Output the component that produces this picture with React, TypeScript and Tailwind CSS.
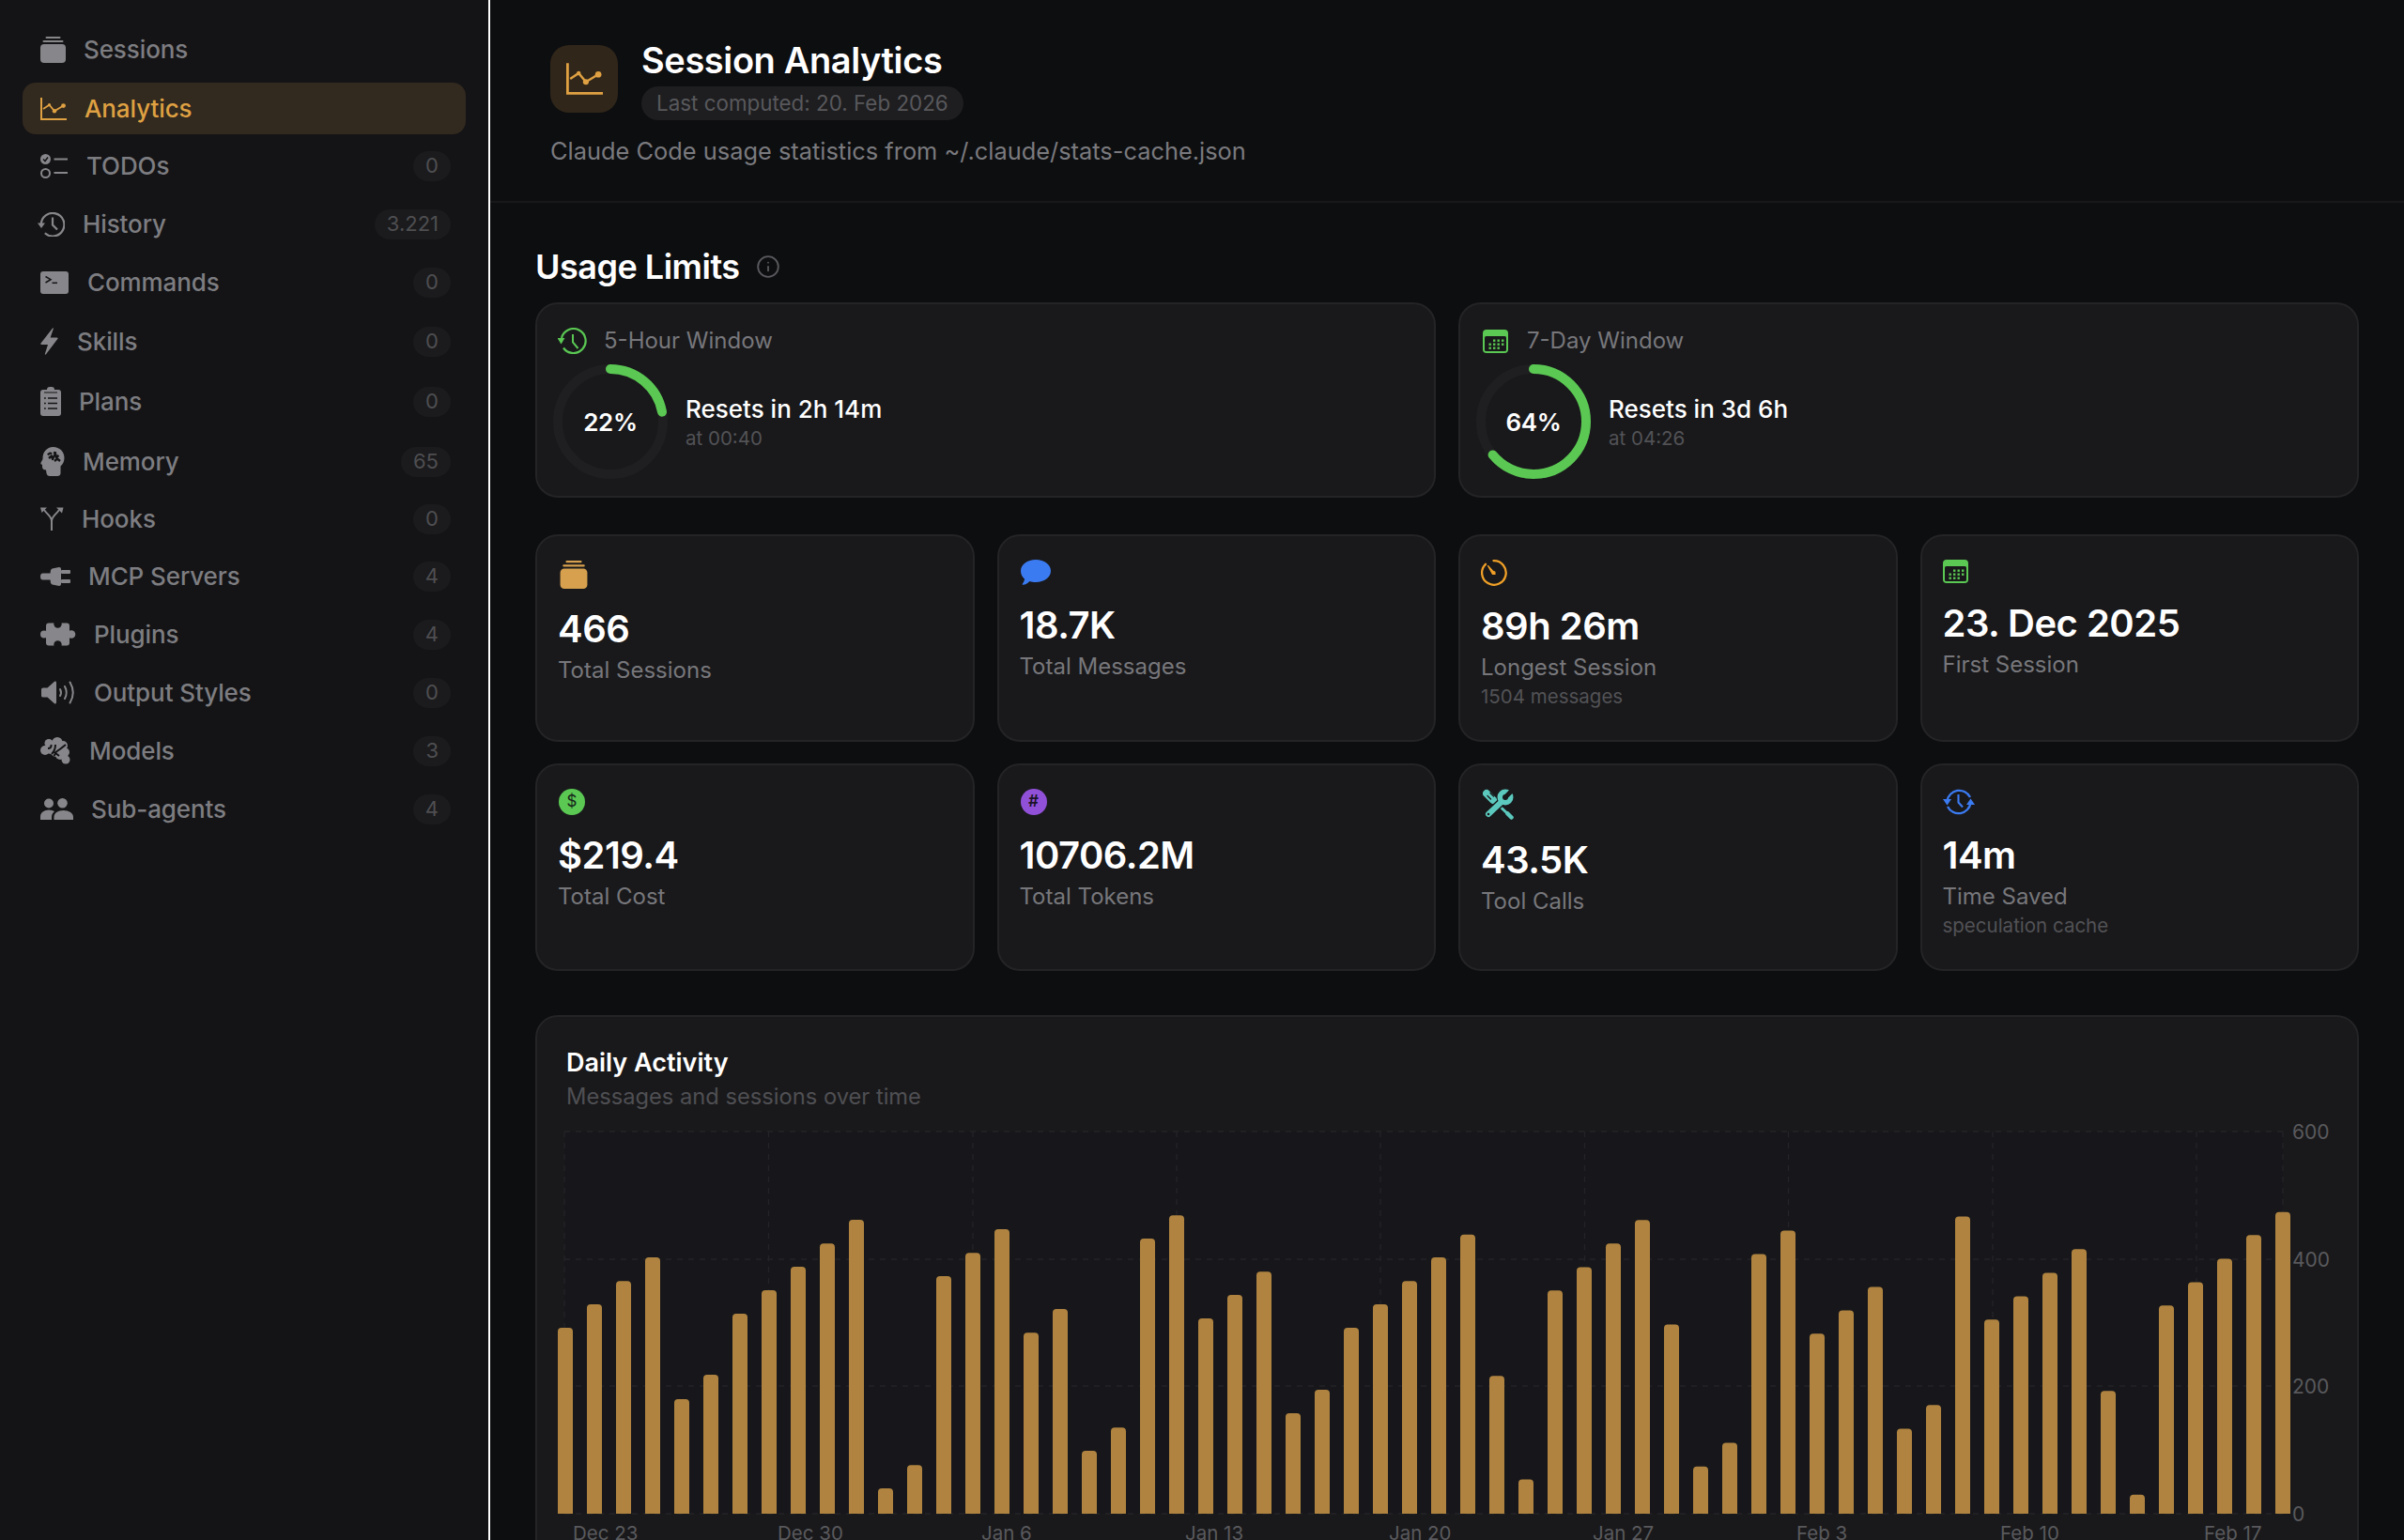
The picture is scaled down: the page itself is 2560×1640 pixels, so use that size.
import React from "react";
import { Info } from "lucide-react";

type P = { className?: string; cut?: string };

const Stack = ({ className, w = 27, h = 29 }: P & { w?: number; h?: number }) => (
  <svg width={w} height={h} viewBox="0 0 27 29" fill="currentColor" className={className}>
    <rect x="0" y="9" width="27" height="20" rx="4" />
    <rect x="2.5" y="5" width="22" height="2" rx="1" />
    <rect x="5.5" y="1" width="16" height="2" rx="1" />
  </svg>
);

const ChartIcon = ({ className, w = 28, h = 24 }: P & { w?: number; h?: number }) => (
  <svg width={w} height={h} viewBox="0 0 28 24" fill="none" stroke="currentColor" className={className}>
    <path d="M1 0V23H28" strokeWidth="2" />
    <path d="M3 12L9.5 7.7L15 14.3L24.5 8.6" strokeWidth="1.8" />
    <circle cx="9.5" cy="7.7" r="1.6" fill="currentColor" stroke="none" />
    <circle cx="15" cy="14.3" r="2.2" fill="currentColor" stroke="none" />
    <circle cx="24.5" cy="8.6" r="2.4" fill="currentColor" stroke="none" />
  </svg>
);

const Todo = ({ className, cut = "#141416" }: P) => (
  <svg width="30" height="26" viewBox="0 0 30 26" fill="none" stroke="currentColor" className={className}>
    <circle cx="5.5" cy="5.5" r="5.5" fill="currentColor" stroke="none" />
    <path d="M3 5.5L5 7.5L8 3.5" stroke={cut} strokeWidth="1.5" />
    <circle cx="5.5" cy="20.5" r="4.5" strokeWidth="2" />
    <path d="M14.5 5.5H29M14.5 20H29" strokeWidth="2" />
  </svg>
);

const HistoryIcon = ({ className }: P) => (
  <svg width="29" height="26" viewBox="-3 0 29 26" fill="none" stroke="currentColor" className={className}>
    <path d="M0.8 13A12.3 12.3 0 1 1 4.8 22.3" strokeWidth="2.2" />
    <path d="M-3 11.5H5L1 17Z" fill="currentColor" stroke="none" />
    <path d="M13 5.5V13.6L18 18.5" strokeWidth="2.2" />
  </svg>
);

const Terminal = ({ className, cut = "#141416" }: P) => (
  <svg width="31" height="24" viewBox="0 0 31 24" fill="currentColor" className={className}>
    <rect width="30" height="24" rx="3" />
    <path d="M5.5 5.5L11 8.7L5.5 12" fill="none" stroke={cut} strokeWidth="1.5" />
    <path d="M12.5 12.3H18" fill="none" stroke={cut} strokeWidth="1.5" />
  </svg>
);

const Bolt = ({ className }: P) => (
  <svg width="20" height="29" viewBox="0 0 20 29" fill="currentColor" className={className}>
    <path d="M13 0.5L0.5 16.5Q-0.3 18 1.5 18H8L4.8 28Q4.8 29.2 6 28.2L18.3 12Q19.2 10.5 17.5 10.5H10.6L13.9 1Q13.9 -0.2 13 0.5Z" />
  </svg>
);

const Clipboard = ({ className, cut = "#141416" }: P) => (
  <svg width="22" height="31" viewBox="0 0 22 31" fill="currentColor" className={className}>
    <rect y="3" width="22" height="28" rx="3" />
    <rect x="7" y="0" width="8" height="6" rx="3" />
    <rect x="4" y="5" width="14" height="2" fill={cut} opacity="0.5" />
    <g stroke={cut} strokeWidth="1.7">
      <path d="M8 12H18M8 17.5H18M8 23H18" />
      <path d="M4 12H5.8M4 17.5H5.8M4 23H5.8" />
    </g>
  </svg>
);

const Head = ({ className, cut = "#141416" }: P) => (
  <svg width="26" height="31" viewBox="0 0 26 31" fill="currentColor" className={className}>
    <path d="M13.5 0C20.5 0 25.5 5 25.5 11.5C25.5 15.5 24 18.3 21.5 20.5V28C21.5 30 20 31 18 31H10C8 31 7 30 6.5 28L6 24.5C3 24.5 2 23 2 21V19C0.5 18.5 0 17.5 0.6 16.5L2.5 13C2 5.5 7 0 13.5 0Z" />
    <path d="M8 8.5Q10 5.5 12 7.5M9 12L12 9.5L13 13L16 7L17 11L19.5 9M14 6L17 6.5M15 15L18 12.5L21 15" fill="none" stroke={cut} strokeWidth="2.3" strokeLinejoin="round" />
  </svg>
);

const Branch = ({ className }: P) => (
  <svg width="25" height="25" viewBox="0 0 25 25" fill="none" stroke="currentColor" className={className}>
    <path d="M12 25V15C12 10 7.5 8 4 3M12 15C12 10 16.5 8 20 3" strokeWidth="2" />
    <path d="M0 0.5L7 0.5L1.5 6Z M24.5 0.5L17 0.5L23 6.5Z" fill="currentColor" stroke="none" />
  </svg>
);

const Plug = ({ className }: P) => (
  <svg width="32" height="20" viewBox="0 0 32 20" fill="currentColor" className={className}>
    <path d="M11 3Q12 1 15 1L20 0Q22 0 22 2V18Q22 20 20 20L15 19Q12 19 11 17L10.5 13.5H2.5Q0 13.5 0 10Q0 6.5 2.5 6.5H10.5Z" />
    <rect x="22" y="3" width="10" height="4" rx="1" />
    <rect x="22" y="13" width="10" height="4" rx="1" />
  </svg>
);

const Puzzle = ({ className, cut = "#141416" }: P) => (
  <svg width="38" height="25" viewBox="0 0 38 25" fill="currentColor" className={className}>
    <rect x="6" y="0.5" width="25" height="24" rx="3" />
    <circle cx="4" cy="12.5" r="4" />
    <circle cx="33" cy="12.5" r="4.3" />
    <rect x="3" y="9.5" width="6" height="6" />
    <rect x="29" y="9.5" width="5" height="6" />
    <circle cx="18.5" cy="1.5" r="4.2" fill={cut} />
    <circle cx="18.5" cy="23.5" r="4.2" fill={cut} />
    <rect x="15" y="-1" width="7" height="2.5" fill={cut} />
    <rect x="15" y="23.5" width="7" height="2" fill={cut} />
  </svg>
);

const Speaker = ({ className }: P) => (
  <svg width="38" height="25" viewBox="-1 0 38 25" fill="none" stroke="currentColor" className={className}>
    <path d="M0 9Q0 7.5 2 7.5H6.5L14 0.8Q16 0 16 2V23Q16 25 14 24.2L6.5 17.5H2Q0 17.5 0 16Z" fill="currentColor" stroke="none" />
    <path d="M20 9Q22 12.5 20 16M25 6Q28.5 12.5 25 19" strokeWidth="2" strokeLinecap="round" />
    <path d="M30.5 1.5Q37 12.5 30.5 23.5" strokeWidth="2" strokeLinecap="round" />
  </svg>
);

const BrainIcon = ({ className, cut = "#141416" }: P) => (
  <svg width="33" height="29" viewBox="1 0 33 29" fill="currentColor" className={className}>
    <circle cx="6" cy="14" r="5" />
    <circle cx="10" cy="6.5" r="4.5" />
    <circle cx="19" cy="5.5" r="5.5" />
    <circle cx="25" cy="9" r="5" />
    <circle cx="27.5" cy="16" r="4.5" />
    <circle cx="28" cy="24" r="4.5" />
    <circle cx="18" cy="14" r="7" />
    <circle cx="12" cy="13" r="5" />
    <circle cx="22" cy="19" r="5" />
    <path d="M9 12Q13 12 12.5 8M13 18Q17 14 17 8M14.5 15L21 20M28 8Q22 13 18 15.5L15.5 20" fill="none" stroke={cut} strokeWidth="2" />
  </svg>
);

const People = ({ className }: P) => (
  <svg width="35" height="23" viewBox="0 0 35 23" fill="currentColor" className={className}>
    <circle cx="9" cy="5.5" r="5" />
    <circle cx="23.5" cy="5.3" r="5.3" />
    <path d="M0 23V19.5C0 15.5 4 12.5 9 12.5C11.5 12.5 13.5 13.2 15 14.3C12.8 16 12 18 12 20V23Z" />
    <path d="M14.5 23V20C14.5 16 18.5 13 24.5 13C30.5 13 35 16 35 20V23Z" />
  </svg>
);

const Bubble = ({ className }: P) => (
  <svg width="32" height="27" viewBox="0 0 32 27" fill="currentColor" className={className}>
    <path d="M16 0C25 0 32 5.4 32 12C32 18.6 25 24 16 24C13.5 24 11.5 23.6 9.5 23C7.5 25 4.5 26.8 2.5 26.8C1.5 26.8 1.5 26 2 25.4C3.2 24 4 22.2 4 20.5C1.5 18.3 0 15.3 0 12C0 5.4 7 0 16 0Z" />
  </svg>
);

const Timer = ({ className }: P) => (
  <svg width="28" height="28" viewBox="0 0 28 28" fill="none" stroke="currentColor" className={className}>
    <path d="M13.5 1.2A12.8 12.8 0 1 1 5 4.8" strokeWidth="2.3" strokeLinecap="round" />
    <path d="M7.5 6.5L13 12.5L15 15.5L12.5 15.5Z" fill="currentColor" strokeWidth="1.2" strokeLinejoin="round" />
    <circle cx="13.7" cy="14" r="2" fill="currentColor" stroke="none" />
  </svg>
);

const Calendar = ({ className, cut = "#19191b" }: P) => {
  const dots: [number, number][] = [
    [11, 10.5], [15.5, 10.5], [20, 10.5],
    [6.5, 14.5], [11, 14.5], [15.5, 14.5], [20, 14.5],
    [6.5, 18.5], [11, 18.5], [15.5, 18.5],
  ];
  return (
    <svg width="27" height="25" viewBox="0 0 27 25" fill="currentColor" className={className}>
      <rect width="27" height="25" rx="4" />
      <rect x="2" y="7" width="23" height="16" rx="1.5" fill={cut} />
      {dots.map(([x, y], i) => (
        <rect key={i} x={x} y={y} width="2.4" height="2.4" />
      ))}
    </svg>
  );
};

const ClockArrow = ({ className }: P) => (
  <svg width="31" height="28" viewBox="0 0 31 28" fill="none" stroke="currentColor" className={className}>
    <path d="M4 11A13 13 0 1 1 6 21.5" strokeWidth="2.2" />
    <path d="M-0.5 11H7.5L3.5 17.5Z" fill="currentColor" stroke="none" />
    <path d="M16 7V15.5L21.5 22" strokeWidth="2" />
  </svg>
);

const ClockBoth = ({ className }: P) => (
  <svg width="34" height="28" viewBox="0 0 34 28" fill="none" stroke="currentColor" className={className}>
    <path d="M4.5 13A13 13 0 0 1 29 9" strokeWidth="2.3" />
    <path d="M29.5 15A13 13 0 0 1 5 19" strokeWidth="2.3" />
    <path d="M0 11H9L4.5 17.5Z" fill="currentColor" stroke="none" />
    <path d="M25 17H34L29.5 10.5Z" fill="currentColor" stroke="none" />
    <path d="M16.5 6V14.5L21 19.5" strokeWidth="2.1" />
  </svg>
);

const Tools = ({ className, cut = "#19191b" }: P) => (
  <svg width="34" height="33" viewBox="0 0 34 33" fill="none" stroke="currentColor" strokeLinecap="round" className={className}>
    <path d="M4 5L11 12" strokeWidth="8" />
    <path d="M10 11L28 28" strokeWidth="3" />
    <path d="M26.5 26.5L30.5 30.5" strokeWidth="4.5" />
    <path d="M5 7.5L8.5 11M8 4.5L11.5 8" stroke={cut} strokeWidth="1.3" />
    <path d="M22 12L6 27" stroke={cut} strokeWidth="9" />
    <path d="M22 12L6 27" strokeWidth="6" />
    <circle cx="24" cy="9" r="8.5" fill="currentColor" stroke="none" />
    <path d="M24 9L33 0M29 -1L35 5" stroke={cut} strokeWidth="5" strokeLinecap="butt" />
    <circle cx="24" cy="9" r="3" fill={cut} stroke="none" />
    <circle cx="6" cy="27" r="1.3" fill={cut} stroke="none" />
  </svg>
);

const Badge = ({ children }: { children: React.ReactNode }) => (
  <span className="ml-auto flex h-[32px] min-w-[38px] items-center justify-center rounded-full bg-[#1b1b1d] px-[13px] text-[22px] text-[#4e4e51]">
    {children}
  </span>
);

const nav = [
  { label: "Sessions", mt: "mt-[25px]", icon: <Stack className="text-[#87878b]" /> },
  { label: "Analytics", mt: "mt-[8px]", active: true, icon: <ChartIcon className="text-[#dfa142]" /> },
  { label: "TODOs", mt: "mt-[6px]", badge: "0", icon: <Todo className="text-[#87878b]" /> },
  { label: "History", mt: "mt-[7px]", badge: "3.221", icon: <HistoryIcon className="-ml-[3px] text-[#87878b]" /> },
  { label: "Commands", mt: "mt-[7px]", badge: "0", icon: <Terminal className="text-[#87878b]" /> },
  { label: "Skills", mt: "mt-[8px]", badge: "0", icon: <Bolt className="text-[#87878b]" /> },
  { label: "Plans", mt: "mt-[9px]", badge: "0", icon: <Clipboard className="text-[#87878b]" /> },
  { label: "Memory", mt: "mt-[9px]", badge: "65", icon: <Head className="text-[#87878b]" /> },
  { label: "Hooks", mt: "mt-[6px]", badge: "0", icon: <Branch className="text-[#87878b]" /> },
  { label: "MCP Servers", mt: "mt-[6px]", badge: "4", icon: <Plug className="text-[#87878b]" /> },
  { label: "Plugins", mt: "mt-[7px]", badge: "4", icon: <Puzzle className="text-[#87878b]" /> },
  { label: "Output Styles", mt: "mt-[7px]", badge: "0", icon: <Speaker className="text-[#87878b]" /> },
  { label: "Models", mt: "mt-[7px]", badge: "3", icon: <BrainIcon className="text-[#87878b]" /> },
  { label: "Sub-agents", mt: "mt-[7px]", badge: "4", icon: <People className="text-[#87878b]" /> },
];

const Ring = ({ pct }: { pct: number }) => {
  const r = 56;
  const c = 2 * Math.PI * r;
  return (
    <div className="relative -ml-[5px] flex h-[122px] w-[122px] shrink-0 items-center justify-center">
      <svg width="122" height="122" viewBox="0 0 122 122" className="absolute inset-0 -rotate-90">
        <circle cx="61" cy="61" r={r} fill="none" stroke="#1f1f21" strokeWidth="10" />
        <circle
          cx="61"
          cy="61"
          r={r}
          fill="none"
          stroke="#5ac853"
          strokeWidth="10"
          strokeLinecap="round"
          strokeDasharray={`${(c * pct) / 100} ${c}`}
        />
      </svg>
      <span className="relative text-[26px] font-semibold tracking-[-0.3px] text-white">{pct}%</span>
    </div>
  );
};

const LimitCard = ({
  icon,
  title,
  pct,
  resets,
  at,
  gap,
}: {
  icon: React.ReactNode;
  title: string;
  pct: number;
  resets: string;
  at: string;
  gap: string;
}) => (
  <div className="h-[208px] rounded-[24px] border-2 border-[#242426] bg-[#19191b] px-[22px] pt-[25px]">
    <div className={`flex h-[28px] items-center ${gap} text-[24px] text-[#77777b]`}>
      {icon}
      <span>{title}</span>
    </div>
    <div className="mt-[11px] flex items-center gap-[19px]">
      <Ring pct={pct} />
      <div className="mt-[3px]">
        <div className="text-[26px] font-medium leading-[34px] text-white">{resets}</div>
        <div className="-mt-[1px] text-[20.5px] leading-[30px] text-[#525256]">{at}</div>
      </div>
    </div>
  </div>
);

const Stat = ({
  icon,
  value,
  label,
  sub,
}: {
  icon: React.ReactNode;
  value: string;
  label: string;
  sub?: string;
}) => (
  <div className="h-[221px] rounded-[24px] border-2 border-[#242426] bg-[#19191b] px-[22px] pt-[25px]">
    <div className="flex">{icon}</div>
    <div className="mt-[17px] text-[40px] font-semibold leading-[52px] tracking-[-0.5px] text-white">{value}</div>
    <div className="text-[24px] leading-[36px] text-[#77777b]">{label}</div>
    {sub && <div className="-mt-[2px] text-[20.5px] leading-[30px] text-[#525256]">{sub}</div>}
  </div>
);

const tops7 = [957, 889, 822, 754, 1162, 1092, 916, 849, 781, 714, 646, 1419, 1352, 808, 741, 673, 971, 903, 1311, 1244, 700, 633, 930, 862, 795, 1203, 1135, 957, 889, 822, 754];
const tops6 = [960, 1241, 1447, 1071, 1025, 978, 931, 1139, 1421, 1374, 999, 952, 1157, 1111, 1064, 1346, 1299, 924, 1129, 1083, 1036, 989, 1271, 1477, 1101, 1055, 1008, 961, 915];
const heights = [...tops7.map((t) => (1492 - t) / 2.703), ...tops6.map((t) => (1515 - t) / 1.867)];

const vGrid = [601, 818.5, 1036, 1253, 1470, 1687.5, 1904.5, 2122, 2339];
const hGrid = [1205, 1341, 1476, 1612];
const xLabels: [string, number][] = [
  ["Dec 23", 610],
  ["Dec 30", 828],
  ["Jan 6", 1045],
  ["Jan 13", 1262],
  ["Jan 20", 1479],
  ["Jan 27", 1696],
  ["Feb 3", 1913],
  ["Feb 10", 2130],
  ["Feb 17", 2347],
];
const yLabels: [string, number][] = [
  ["600", 1205],
  ["400", 1341],
  ["200", 1476],
  ["0", 1612],
];

const Chart = () => (
  <svg width="1938" height="460" viewBox="572 1190 1938 460" className="block" fontFamily="Inter, sans-serif">
    <rect x="601" y="1205" width="1830" height="407" fill="#17171b" />
    {hGrid.map((y) => (
      <path key={y} d={`M601 ${y}H2431`} stroke="#242428" strokeWidth="1.3" strokeDasharray="6 6" />
    ))}
    {[...vGrid, 2431].map((x) => (
      <path key={x} d={`M${x} 1205V1612`} stroke="#242428" strokeWidth="1.3" strokeDasharray="6 6" />
    ))}
    {heights.map((h, i) => {
      const x = 594 + i * 31.0;
      const y = 1612 - h;
      return <path key={i} d={`M${x} 1612V${y + 4}Q${x} ${y} ${x + 4} ${y}H${x + 12}Q${x + 16} ${y} ${x + 16} ${y + 4}V1612Z`} fill="#b08440" />;
    })}
    {xLabels.map(([t, x]) => (
      <text key={t} x={x} y="1640" fontSize="20.5" fill="#59595d">
        {t}
      </text>
    ))}
    {yLabels.map(([t, y]) => (
      <text key={t} x="2441" y={y + 8} fontSize="21" fill="#59595d">
        {t}
      </text>
    ))}
  </svg>
);

export default function App() {
  return (
    <div className="flex h-screen w-full overflow-hidden bg-[#0d0e10] font-['Inter',sans-serif]">
      <aside className="h-full w-[522px] shrink-0 border-r-2 border-white bg-[#141416] px-[24px]">
        {nav.map((n) => (
          <div
            key={n.label}
            className={`flex h-[55px] items-center gap-[19px] rounded-[14px] pl-[19px] pr-[16px] ${n.mt} ${
              n.active ? "bg-[#32291f] text-[#dfa142]" : "text-[#7d7d81]"
            }`}
          >
            {n.icon}
            <span className="text-[26px] font-medium tracking-[-0.1px]">{n.label}</span>
            {n.badge && <Badge>{n.badge}</Badge>}
          </div>
        ))}
      </aside>

      <main className="min-w-0 flex-1 overflow-hidden">
        <header className="h-[216px] border-b-2 border-[#18181a] pl-[64px] pt-[44px]">
          <div className="flex items-start gap-[25px]">
            <div className="mt-[4px] flex h-[72px] w-[72px] items-center justify-center rounded-[20px] bg-[#31261a]">
              <ChartIcon className="text-[#dfa142]" w={39} h={34} />
            </div>
            <div>
              <h1 className="text-[38px] font-semibold leading-[40px] tracking-[-0.4px] text-white">Session Analytics</h1>
              <div className="mt-[8px] inline-flex h-[36px] items-center rounded-full bg-[#1e1e20] px-[16px] text-[22.4px] text-[#58585c]">
                Last computed: 20. Feb 2026
              </div>
            </div>
          </div>
          <p className="mt-[15px] text-[25.4px] leading-[36px] text-[#7a7a7e]">
            Claude Code usage statistics from ~/.claude/stats-cache.json
          </p>
        </header>

        <div className="px-[48px] pt-[46px]">
          <div className="flex h-[44px] items-center gap-[17px]">
            <h2 className="text-[36px] font-semibold tracking-[-0.5px] text-white">Usage Limits</h2>
            <Info size={26} strokeWidth={1.7} className="text-[#5a5a5e]" />
          </div>

          <div className="mt-[16px] grid grid-cols-2 gap-[24px]">
            <LimitCard
              icon={<ClockArrow className="text-[#5ac853]" />}
              title="5-Hour Window"
              pct={22}
              resets="Resets in 2h 14m"
              at="at 00:40"
              gap="gap-[18px]"
            />
            <LimitCard
              icon={<Calendar className="ml-[2px] text-[#5ac853]" />}
              title="7-Day Window"
              pct={64}
              resets="Resets in 3d 6h"
              at="at 04:26"
              gap="gap-[20px]"
            />
          </div>

          <div className="mt-[39px] grid grid-cols-4 gap-x-[24px] gap-y-[23px]">
            <Stat icon={<Stack className="ml-[2px] text-[#d6a04e]" w={30} h={31} />} value="466" label="Total Sessions" />
            <Stat icon={<Bubble className="ml-[1px] text-[#3b7bf2]" />} value="18.7K" label="Total Messages" />
            <Stat icon={<Timer className="text-[#ef9f27]" />} value="89h 26m" label="Longest Session" sub="1504 messages" />
            <Stat icon={<Calendar className="text-[#5ac853]" />} value="23. Dec 2025" label="First Session" />
            <Stat
              icon={
                <div className="ml-[1px] flex h-[28px] w-[28px] items-center justify-center rounded-full bg-[#5ac853] text-[17px] text-[#17251a]">$</div>
              }
              value="$219.4"
              label="Total Cost"
            />
            <Stat
              icon={
                <div className="ml-[1px] flex h-[28px] w-[28px] items-center justify-center rounded-full bg-[#9150d8] text-[17px] font-semibold text-[#1c1428]">#</div>
              }
              value="10706.2M"
              label="Total Tokens"
            />
            <Stat icon={<Tools className="ml-[2px] text-[#5cc9be]" />} value="43.5K" label="Tool Calls" />
            <Stat icon={<ClockBoth className="text-[#3b7bf2]" />} value="14m" label="Time Saved" sub="speculation cache" />
          </div>

          <section className="mt-[47px] h-[620px] rounded-[24px] border-2 border-[#242426] bg-[#19191b] pt-[31px]">
            <div className="pl-[31px]">
              <h3 className="text-[27px] font-semibold leading-[36px] text-white">Daily Activity</h3>
              <p className="mt-[2px] text-[23.7px] leading-[32px] text-[#4f4f53]">Messages and sessions over time</p>
            </div>
            <div className="mt-[6px]">
              <Chart />
            </div>
          </section>
        </div>
      </main>
    </div>
  );
}
